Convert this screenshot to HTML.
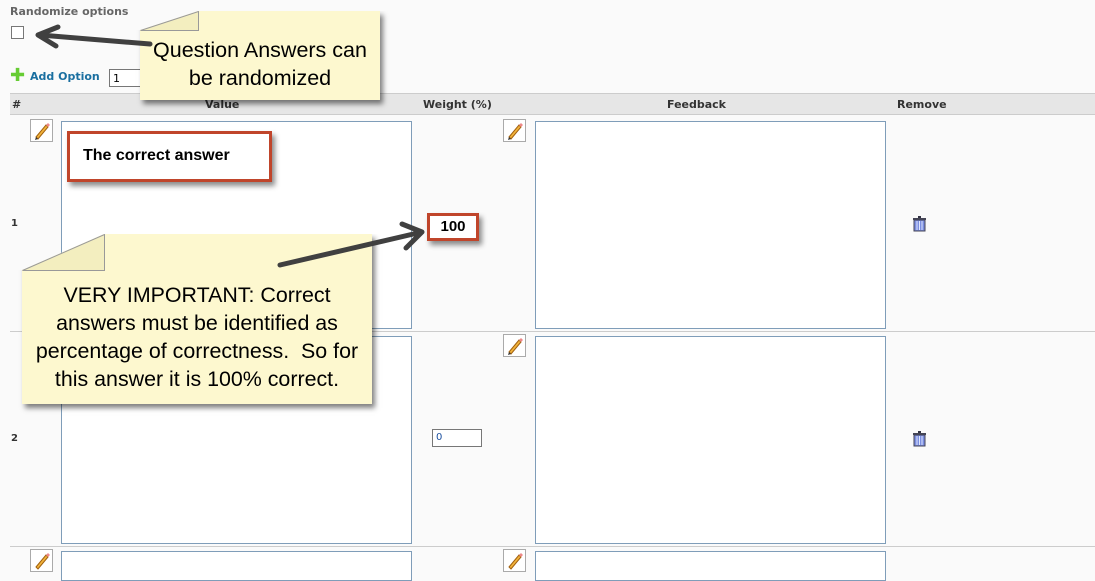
<!DOCTYPE html>
<html><head><meta charset="utf-8"><style>
*{margin:0;padding:0;box-sizing:border-box}
body{width:1095px;height:566px;overflow:hidden;background:#fafafa;font-family:"DejaVu Sans",Verdana,sans-serif;position:relative}
.a{position:absolute}
.ta{position:absolute;background:#fff;border:1px solid #7f9db9}
.pen{position:absolute;width:23px;height:23px;border:1px solid #aaa;background:#fff}
.hd{font-size:11px;font-weight:bold;color:#333}
.sep{position:absolute;left:10px;right:0;height:1px;background:#ccc}
.note{position:absolute;background:#fdf8cf;font-family:"Liberation Sans",Arial,sans-serif;color:#000;text-align:center;box-shadow:3px 4px 5px rgba(0,0,0,.5)}
</style></head><body>
<div class="a hd" style="left:10px;top:5px;color:#666">Randomize options</div>
<div class="a" style="left:11px;top:26px;width:13px;height:13px;border:1px solid #777;background:#fff"></div>
<div class="a" style="left:10px;top:69px;color:#6c3;font-weight:bold;font-size:18px;line-height:14px">✚</div>
<div class="a hd" style="left:30px;top:70px;color:#1a6fa0">Add Option</div>
<div class="a" style="left:109px;top:69px;width:40px;height:18px;border:1px solid #777;background:#fff;font-size:11px;padding:2px 3px">1</div>
<div class="a" style="left:10px;top:93px;right:0;height:22px;background:#e6e6e6;border-top:1px solid #ccc;border-bottom:1px solid #ccc"></div>
<div class="a hd" style="left:12px;top:98px">#</div>
<div class="a hd" style="left:205px;top:98px">Value</div>
<div class="a hd" style="left:423px;top:98px">Weight (%)</div>
<div class="a hd" style="left:667px;top:98px">Feedback</div>
<div class="a hd" style="left:897px;top:98px">Remove</div>

<div class="pen" style="left:30px;top:119px"><svg width="21" height="21"><path d="M5 17 L15 5 L17 7 L7 19Z" fill="#f2b33a" stroke="#a06010"/><path d="M15 5 L17 3 L19 5 L17 7Z" fill="#e88"/><path d="M5 17 L4 20 L7 19Z" fill="#333"/></svg></div>
<div class="pen" style="left:503px;top:119px"><svg width="21" height="21"><path d="M5 17 L15 5 L17 7 L7 19Z" fill="#f2b33a" stroke="#a06010"/><path d="M15 5 L17 3 L19 5 L17 7Z" fill="#e88"/><path d="M5 17 L4 20 L7 19Z" fill="#333"/></svg></div>
<div class="pen" style="left:503px;top:334px"><svg width="21" height="21"><path d="M5 17 L15 5 L17 7 L7 19Z" fill="#f2b33a" stroke="#a06010"/><path d="M15 5 L17 3 L19 5 L17 7Z" fill="#e88"/><path d="M5 17 L4 20 L7 19Z" fill="#333"/></svg></div>
<div class="pen" style="left:30px;top:549px"><svg width="21" height="21"><path d="M5 17 L15 5 L17 7 L7 19Z" fill="#f2b33a" stroke="#a06010"/><path d="M15 5 L17 3 L19 5 L17 7Z" fill="#e88"/></svg></div>
<div class="pen" style="left:503px;top:549px"><svg width="21" height="21"><path d="M5 17 L15 5 L17 7 L7 19Z" fill="#f2b33a" stroke="#a06010"/><path d="M15 5 L17 3 L19 5 L17 7Z" fill="#e88"/></svg></div>

<div class="ta" style="left:61px;top:121px;width:351px;height:208px"></div>
<div class="ta" style="left:535px;top:121px;width:351px;height:208px"></div>
<div class="ta" style="left:61px;top:336px;width:351px;height:208px"></div>
<div class="ta" style="left:535px;top:336px;width:351px;height:208px"></div>
<div class="ta" style="left:61px;top:551px;width:351px;height:30px"></div>
<div class="ta" style="left:535px;top:551px;width:351px;height:30px"></div>
<div class="sep" style="top:331px"></div>
<div class="sep" style="top:546px"></div>
<div class="a hd" style="left:11px;top:218px;font-size:10px">1</div>
<div class="a hd" style="left:11px;top:433px;font-size:10px">2</div>
<div class="a" style="left:432px;top:429px;width:50px;height:18px;border:1px solid #777;background:#fff;font-size:10px;padding:2px 3px;color:#1a4f9f">0</div>
<svg class="a" style="left:912px;top:215px" width="16" height="18"><rect x="6" y="1" width="3" height="2" fill="#334"/><rect x="1" y="3" width="13" height="2" fill="#445"/><rect x="2" y="5" width="11" height="11" fill="#7b8ee0" stroke="#445"/><path d="M5 6v9M7.5 6v9M10 6v9" stroke="#dfe6ff"/></svg>
<svg class="a" style="left:912px;top:430px" width="16" height="18"><rect x="6" y="1" width="3" height="2" fill="#334"/><rect x="1" y="3" width="13" height="2" fill="#445"/><rect x="2" y="5" width="11" height="11" fill="#7b8ee0" stroke="#445"/><path d="M5 6v9M7.5 6v9M10 6v9" stroke="#dfe6ff"/></svg>

<div class="a" style="left:67px;top:131px;width:205px;height:51px;border:3px solid #c0452b;background:#fff;box-shadow:3px 4px 5px rgba(0,0,0,.45);font-family:'Liberation Sans',Arial,sans-serif;font-weight:bold;font-size:16px;padding:13px 0 0 13px">The correct answer</div>
<div class="a" style="left:427px;top:213px;width:52px;height:28px;border:3px solid #c0452b;background:#fff;box-shadow:3px 4px 5px rgba(0,0,0,.45);font-family:'Liberation Sans',Arial,sans-serif;font-weight:bold;font-size:15px;text-align:center;line-height:22px">100</div>

<div class="note" style="left:140px;top:11px;width:240px;height:89px;font-size:21.5px;line-height:28px;padding-top:25px;clip-path:polygon(58px 0,calc(100% + 12px) 0,calc(100% + 12px) calc(100% + 12px),-10px calc(100% + 12px),-10px 19px,0 19px)">Question Answers can<br>be randomized</div>
<svg class="a" style="left:140px;top:11px" width="60" height="22"><path d="M0.5 19.5 L58.5 0.5 L58.5 19.5Z" fill="#f3eebf" stroke="#999"/></svg>
<div class="note" style="left:22px;top:234px;width:350px;height:170px;font-size:21.4px;line-height:28px;padding-top:47px;clip-path:polygon(82px 0,calc(100% + 12px) 0,calc(100% + 12px) calc(100% + 12px),-10px calc(100% + 12px),-10px 36px,0 36px)">VERY IMPORTANT: Correct<br>answers must be identified as<br>percentage of correctness.&nbsp; So for<br>this answer it is 100% correct.</div>
<svg class="a" style="left:22px;top:234px" width="86" height="40"><path d="M0.5 36.5 L82.5 0.5 L82.5 36.5Z" fill="#f3eebf" stroke="#999"/></svg>

<svg class="a" style="left:0;top:0" width="1095" height="566">
<path d="M150 44 L40 35 M58 27 L38 35 L56 46" fill="none" stroke="#404040" stroke-width="5" stroke-linecap="round" stroke-linejoin="round"/>
<path d="M280 265 L422 232 M402 224 L422 232 L406 248" fill="none" stroke="#404040" stroke-width="5" stroke-linecap="round" stroke-linejoin="round"/>
</svg>
</body></html>
